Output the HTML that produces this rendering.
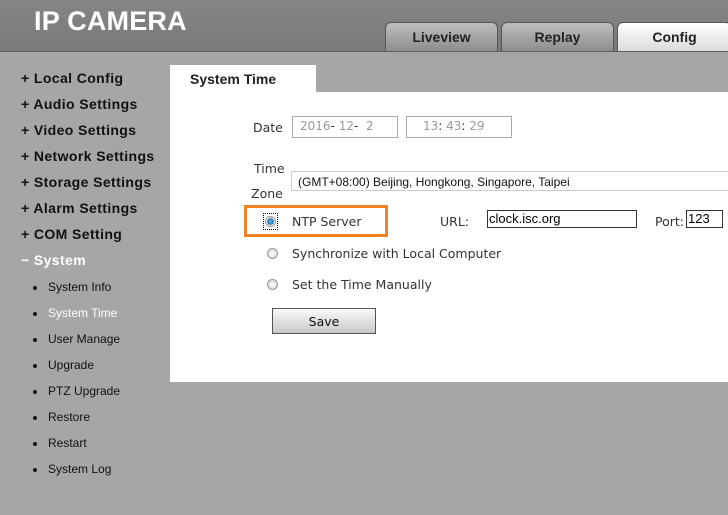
<!DOCTYPE html>
<html><head><style>
*{margin:0;padding:0;box-sizing:border-box}
body{width:728px;height:515px;overflow:hidden;background:#a6a6a6;font-family:"Liberation Sans",Arial,sans-serif;position:relative}
.hdr{position:absolute;left:0;top:0;width:728px;height:52px;background:linear-gradient(#858585,#7a7a7a);border-bottom:1px solid #5e5e5e}
.logo{position:absolute;left:34px;top:6px;color:#fff;font-size:27px;font-weight:bold;letter-spacing:0.2px}
.tab{position:absolute;top:22px;height:29px;border:1px solid #555;border-bottom:none;border-radius:6px 6px 0 0;background:linear-gradient(#bdbdbd,#8e8e8e);font-weight:bold;font-size:14px;color:#222;text-align:center;line-height:28px}
.nav{position:absolute;left:21px;font-size:14px;font-weight:bold;color:#111;letter-spacing:0.4px}
.sub{position:absolute;left:33px;font-size:12px;color:#111}
.sub:before{content:"";position:absolute;left:0;top:6px;width:4px;height:4px;border-radius:50%;background:#111}
.sub span{margin-left:15px}
.panel{position:absolute;left:170px;top:92px;width:558px;height:290px;background:#fff}
.ptab{position:absolute;left:170px;top:65px;width:146px;height:28px;background:#fff;font-weight:bold;font-size:14px;color:#222;padding:6px 0 0 20px}
.t{position:absolute;font-family:"DejaVu Sans",sans-serif;font-size:12.5px;color:#333}
.box{position:absolute;border:1px solid #aaa;font-family:"DejaVu Sans",sans-serif;font-size:12px;color:#999}
.radio{position:absolute;width:11px;height:11px;border-radius:50%;border:1px solid #999;background:radial-gradient(#fff,#ccc)}
</style></head><body>
<div class="hdr"><div class="logo">IP CAMERA</div>
<div class="tab" style="left:385px;width:113px">Liveview</div>
<div class="tab" style="left:501px;width:113px">Replay</div>
<div class="tab" style="left:617px;width:115px;background:linear-gradient(#fff,#dcdcdc)">Config</div>
</div>
<div class="nav" style="top:70px">+ Local Config</div>
<div class="nav" style="top:96px">+ Audio Settings</div>
<div class="nav" style="top:122px">+ Video Settings</div>
<div class="nav" style="top:148px">+ Network Settings</div>
<div class="nav" style="top:174px">+ Storage Settings</div>
<div class="nav" style="top:200px">+ Alarm Settings</div>
<div class="nav" style="top:226px">+ COM Setting</div>
<div class="nav" style="top:252px;color:#fff">&minus; System</div>
<div class="sub" style="top:280px"><span>System Info</span></div>
<div class="sub" style="top:306px;color:#fff"><span>System Time</span></div>
<div class="sub" style="top:332px"><span>User Manage</span></div>
<div class="sub" style="top:358px"><span>Upgrade</span></div>
<div class="sub" style="top:384px"><span>PTZ Upgrade</span></div>
<div class="sub" style="top:410px"><span>Restore</span></div>
<div class="sub" style="top:436px"><span>Restart</span></div>
<div class="sub" style="top:462px"><span>System Log</span></div>
<div class="ptab">System Time</div>
<div class="panel"></div>
<div class="t" style="left:253px;top:120px">Date</div>
<div class="box" style="left:292px;top:116px;width:106px;height:22px;padding:2px 0 0 7px">2016<span style="color:#333">-</span> 12<span style="color:#333">-</span> &nbsp;2</div>
<div class="box" style="left:406px;top:116px;width:106px;height:22px;padding:2px 0 0 16px">13<span style="color:#333">:</span> 43<span style="color:#333">:</span> 29</div>
<div class="t" style="left:254px;top:161px">Time</div>
<div class="t" style="left:251px;top:186px">Zone</div>
<div style="position:absolute;left:291px;top:171px;width:440px;height:20px;border:1px solid #ccc;font-size:12px;color:#111;padding:3px 0 0 6px">(GMT+08:00) Beijing, Hongkong, Singapore, Taipei</div>
<div style="position:absolute;left:244px;top:205px;width:144px;height:32px;border:3px solid #f58220"></div>
<div style="position:absolute;left:263px;top:213px;width:15px;height:17px;border:1px dotted #000"></div>
<div class="radio" style="left:265px;top:216px;background:radial-gradient(#4aa3e0 30%,#0a4f80 45%,#eee 55%)"></div>
<div class="t" style="left:292px;top:214px">NTP Server</div>
<div class="t" style="left:440px;top:214px">URL:</div>
<div style="position:absolute;left:487px;top:210px;width:150px;height:18px;border:1px solid #333;font-size:13px;padding:0 0 0 1px">clock.isc.org</div>
<div class="t" style="left:655px;top:214px">Port:</div>
<div style="position:absolute;left:686px;top:210px;width:37px;height:18px;border:1px solid #333;font-size:13px;padding:0 0 0 1px">123</div>
<div class="radio" style="left:267px;top:248px"></div>
<div class="t" style="left:292px;top:246px">Synchronize with Local Computer</div>
<div class="radio" style="left:267px;top:279px"></div>
<div class="t" style="left:292px;top:277px">Set the Time Manually</div>
<div style="position:absolute;left:272px;top:308px;width:104px;height:26px;border:1px solid #555;background:linear-gradient(#fafafa,#c8c8c8);font-family:'DejaVu Sans',sans-serif;font-size:12.5px;text-align:center;line-height:25px;color:#111">Save</div>
</body></html>
